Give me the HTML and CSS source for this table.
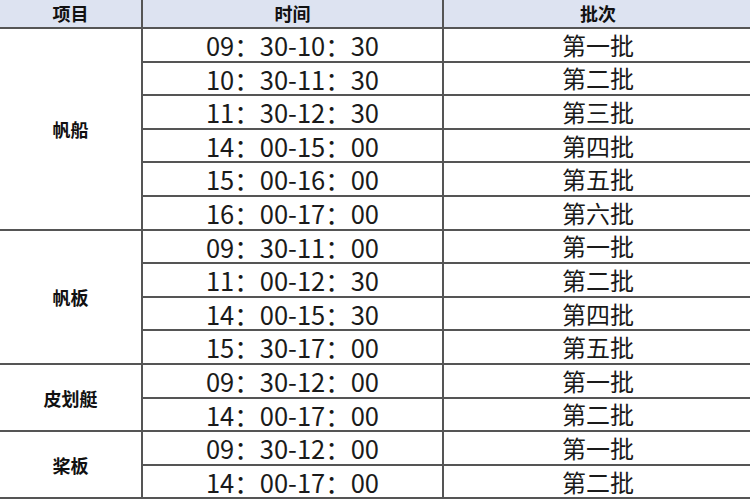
FILE: index.html
```html
<!DOCTYPE html>
<html lang="zh">
<head>
<meta charset="utf-8">
<link rel="stylesheet" href="styles.css">
</head>
<body>
<table class="sched">
  <colgroup><col class="c1"><col class="c2"><col class="c3"></colgroup>
  <thead>
    <tr class="head"><th>项目</th><th>时间</th><th>批次</th></tr>
  </thead>
  <tbody>
    <tr><td class="grp" rowspan="6">帆船</td><td class="time">09：30-10：30</td><td>第一批</td></tr>
    <tr><td class="time">10：30-11：30</td><td>第二批</td></tr>
    <tr><td class="time">11：30-12：30</td><td>第三批</td></tr>
    <tr><td class="time">14：00-15：00</td><td>第四批</td></tr>
    <tr><td class="time">15：00-16：00</td><td>第五批</td></tr>
    <tr><td class="time">16：00-17：00</td><td>第六批</td></tr>
    <tr><td class="grp" rowspan="4">帆板</td><td class="time">09：30-11：00</td><td>第一批</td></tr>
    <tr><td class="time">11：00-12：30</td><td>第二批</td></tr>
    <tr><td class="time">14：00-15：30</td><td>第四批</td></tr>
    <tr><td class="time">15：30-17：00</td><td>第五批</td></tr>
    <tr><td class="grp" rowspan="2">皮划艇</td><td class="time">09：30-12：00</td><td>第一批</td></tr>
    <tr><td class="time">14：00-17：00</td><td>第二批</td></tr>
    <tr><td class="grp" rowspan="2">桨板</td><td class="time">09：30-12：00</td><td>第一批</td></tr>
    <tr><td class="time">14：00-17：00</td><td>第二批</td></tr>
  </tbody>
</table>
</body>
</html>
```
FILE: styles.css
```css
html, body {
  margin: 0;
  padding: 0;
  background: #fff;
}
body {
  width: 750px;
  height: 500px;
  overflow: hidden;
  font-family: "Noto Sans CJK SC", "Noto Sans", sans-serif;
  color: #1a1a1a;
}
.sched {
  border-collapse: collapse;
  table-layout: fixed;
  width: 752px;
  margin-top: -1px;
}
.c1 { width: 142px; }
.c2 { width: 301px; }
.c3 { width: 309px; }
.sched th, .sched td {
  border: 2px solid #555;
  padding: 0;
  text-align: center;
  vertical-align: middle;
}
.sched tr > *:first-child { border-left: none; }
.sched tr > *:last-child { border-right: none; }
.sched thead th { border-top: none; }
.head th {
  height: 28px;
  background: #dde3f1;
  font-size: 18px;
  font-weight: 700;
  line-height: 1;
  color: #111;
}
.sched tbody td {
  height: 31.6px;
  font-size: 24px;
  line-height: 1;
}
.sched tbody td.time {
  font-size: 25.5px;
}
.sched tbody td.grp {
  font-size: 18px;
  font-weight: 700;
  color: #111;
}
```
